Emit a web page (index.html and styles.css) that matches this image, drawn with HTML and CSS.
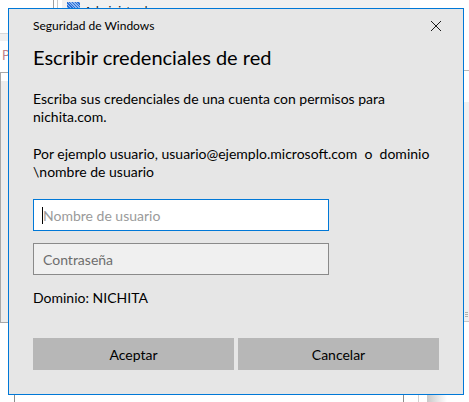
FILE: index.html
```html
<!DOCTYPE html>
<html lang="es">
<head>
<meta charset="utf-8">
<title>Seguridad de Windows</title>
<link rel="stylesheet" href="styles.css">
</head>
<body>
<div class="backdrop">
  <div class="bg-topstrip">
    <span class="bg-tree-line"></span>
    <span class="bg-tree-line second"></span>
    <span class="bg-row">
      <span class="bg-icon"></span>
      <span class="bg-row-text">Administrador</span>
    </span>
  </div>
  <div class="bg-left">
    <div class="bg-left-band"></div>
    <div class="bg-left-letter">P</div>
    <div class="bg-left-box"></div>
  </div>
  <div class="bg-right">
    <div class="bg-right-line"></div>
    <div class="bg-right-panel"><span class="bg-grip"></span></div>
  </div>
  <div class="bg-bottom">
    <span class="bg-bline b1"></span>
    <span class="bg-bline b2"></span>
    <span class="bg-bline b3"></span>
    <span class="bg-shade"></span>
  </div>
</div>

<div class="dialog" role="dialog" aria-label="Seguridad de Windows">
  <div class="dialog-top">
    <span class="dialog-title">Seguridad de Windows</span>
    <span class="close" aria-label="Cerrar">
      <svg width="12" height="12" viewBox="0 0 12 12"><path d="M1 1 L11 11 M11 1 L1 11" stroke="#1a1a1a" stroke-width="1" fill="none"/></svg>
    </span>
  </div>
  <h1 class="heading">Escribir credenciales de red</h1>
  <p class="msg">Escriba sus credenciales de una cuenta con permisos para<br>nichita.com.</p>
  <p class="msg example">Por ejemplo usuario, usuario@ejemplo.microsoft.com&nbsp; o&nbsp; dominio<br>\nombre de usuario</p>
  <div class="field focused"><span class="caret"></span><span class="ph">Nombre de usuario</span></div>
  <div class="field pwd"><span class="ph">Contraseña</span></div>
  <div class="domain">Dominio: NICHITA</div>
  <div class="buttons">
    <button class="btn">Aceptar</button>
    <button class="btn">Cancelar</button>
  </div>
</div>
</body>
</html>
```

FILE: styles.css
```css
* { box-sizing: border-box; }
html, body { margin: 0; padding: 0; }
body {
  width: 469px;
  height: 402px;
  overflow: hidden;
  background: #ffffff;
  font-family: Lato, "Noto Sans", sans-serif;
  color: #000;
  position: relative;
}

/* ---------- background window (behind the dialog) ---------- */
.backdrop {
  position: absolute;
  inset: 0;
}
.bg-topstrip {
  position: absolute;
  left: 0; top: 0;
  width: 469px; height: 9px;
}
.bg-tree-line {
  position: absolute;
  left: 53px; top: 0;
  width: 1px; height: 9px;
  background: #a0a0a0;
}
.bg-tree-line.second { left: 57px; background: #c8c8c8; }
.bg-row {
  position: absolute;
  left: 62px; top: 0;
  width: 348px; height: 9px;
  background: #f0f0f0;
  overflow: hidden;
}
.bg-icon {
  position: absolute;
  left: 5px; top: 2px;
  width: 13px; height: 7px;
  background: repeating-linear-gradient(45deg, #2a6fd6 0 1px, #8fb8f0 1px 2px);
}
.bg-row-text {
  position: absolute;
  left: 22px; top: 3px;
  font-size: 12px;
  color: #1a1a1a;
  white-space: nowrap;
}
.bg-left {
  position: absolute;
  left: 0; top: 0;
  width: 9px; height: 402px;
}
.bg-left-band {
  position: absolute;
  left: 0; top: 33px;
  width: 9px; height: 8px;
  background: #f0f0f0;
  border-top: 1px solid #d8d8d8;
}
.bg-left-letter {
  position: absolute;
  left: 2px; top: 47px;
  font-size: 13px;
  color: #c0808a;
}
.bg-left-box {
  position: absolute;
  left: 0; top: 72px;
  width: 9px; height: 251px;
  border: 1px solid #a8a8a8;
  border-right: 0;
  background: linear-gradient(#fff 0 8px, #ececec 8px);
}
.bg-right {
  position: absolute;
  left: 464px; top: 0;
  width: 5px; height: 402px;
}
.bg-right-line {
  position: absolute;
  left: 0; top: 70px;
  width: 5px; height: 1px;
  background: #b8b8b8;
}
.bg-right-panel {
  position: absolute;
  left: 0; top: 102px;
  width: 5px; height: 220px;
  background: #f0f0f0;
  border-bottom: 1px solid #c8c8c8;
}
.bg-grip {
  position: absolute;
  left: 1px; top: 210px;
  width: 3px; height: 6px;
  background: repeating-linear-gradient(#b0b0b0 0 1px, transparent 1px 2px);
}
.bg-bottom {
  position: absolute;
  left: 0; top: 395px;
  width: 469px; height: 7px;
}
.bg-bline {
  position: absolute;
  top: 0;
  width: 1px; height: 7px;
  background: #8c8c8c;
}
.bg-bline.b1 { left: 14px; }
.bg-bline.b2 { left: 403px; }
.bg-bline.b3 { left: 418px; background: #d0d0d0; }
.bg-shade {
  position: absolute;
  left: 427px; top: 0;
  width: 20px; height: 7px;
  background: linear-gradient(90deg, #c8c8c8, #ffffff);
}

/* ---------- dialog ---------- */
.dialog {
  position: absolute;
  left: 8px; top: 8px;
  width: 456px; height: 387px;
  background: #e6e6e6;
  border: 1px solid #0078d7;
  padding: 0 24px;
  display: flex;
  flex-direction: column;
}
.dialog-top {
  display: flex;
  align-items: center;
  justify-content: space-between;
  height: 33px;
  padding-top: 1px;
}
.dialog-title {
  font-size: 12px;
  line-height: 16px;
}
.close {
  display: flex;
  width: 12px; height: 12px;
  margin-right: -3px;
}
.heading {
  margin: 1px 0 0;
  font-size: 20px;
  font-weight: 400;
  line-height: 28px;
}
.msg {
  margin: 19px 0 0;
  font-size: 14px;
  line-height: 18px;
  white-space: nowrap;
}
.msg.example { margin-top: 19px; }
.field {
  width: 296px;
  height: 32px;
  border: 1px solid #8a8a8a;
  background: #f0f0f0;
  display: flex;
  align-items: center;
  padding-left: 9px;
  font-size: 14px;
}
.field.focused {
  margin-top: 18px;
  background: #ffffff;
  border-color: #0078d7;
  position: relative;
}
.field.pwd { margin-top: 12px; }
.caret {
  position: absolute;
  left: 8px; top: 7px;
  width: 1px; height: 17px;
  background: #000;
}
.ph { color: #9a9a9a; }
.pwd .ph { color: #6d6d6d; }
.domain {
  margin-top: 14px;
  font-size: 14px;
  line-height: 18px;
}
.buttons {
  margin-top: 31px;
  display: flex;
  gap: 4px;
}
.btn {
  flex: 1;
  height: 32px;
  border: 0;
  background: #b7b7b7;
  font-family: inherit;
  font-size: 14px;
  color: #000;
  padding: 0;
}
```
